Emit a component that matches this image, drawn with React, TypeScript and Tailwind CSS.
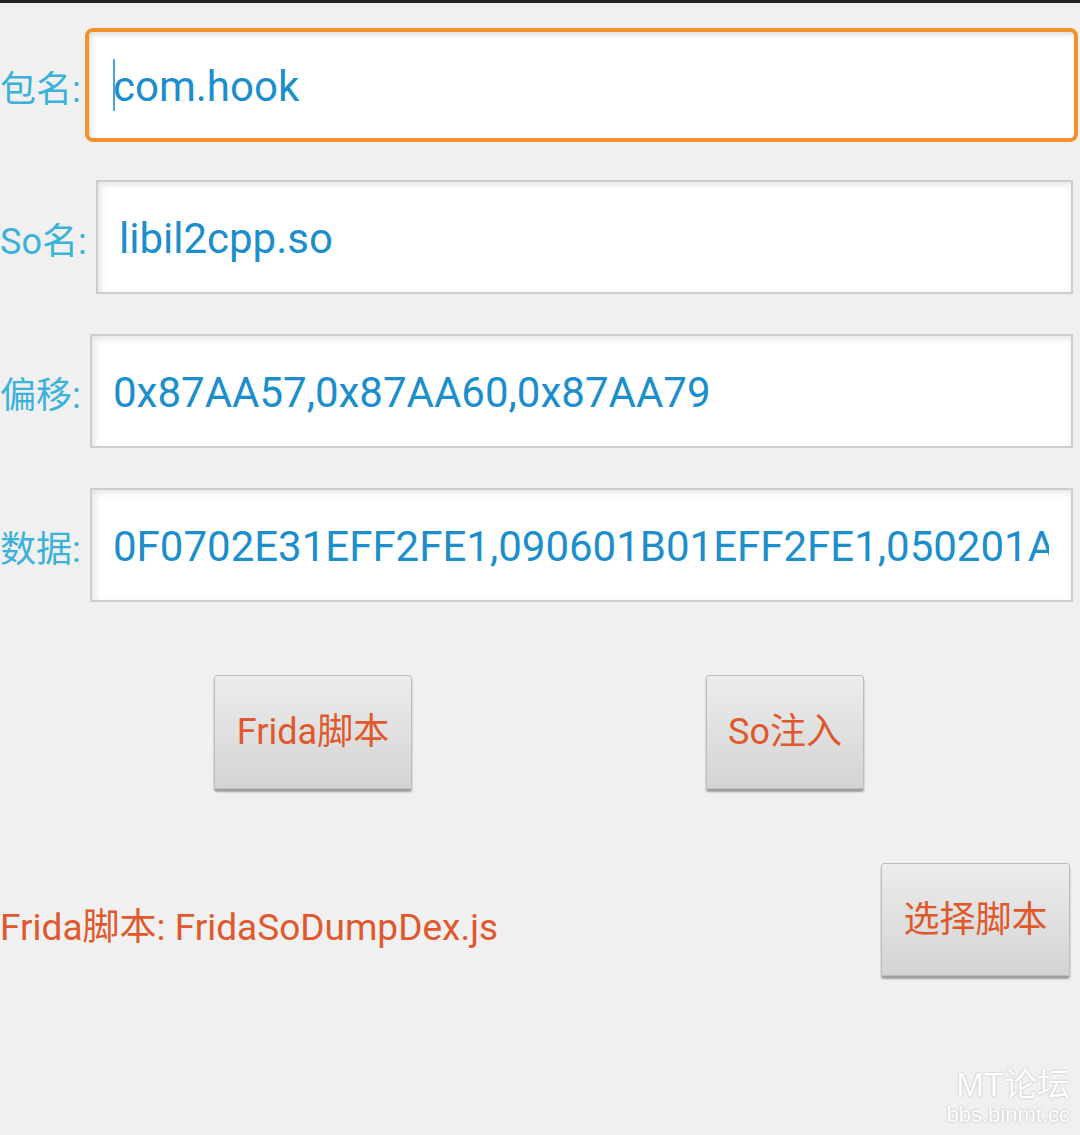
import React from "react";

const FONT = { fontFamily: "Roboto, 'Noto Sans CJK SC', 'Noto Sans', sans-serif" };

function Field({ label, value, labelW, mr, focused, caret }: { label: string; value: string; labelW: string; mr: string; focused?: boolean; caret?: boolean }) {
  return (
    <div className="flex items-center h-[114px]">
      <div className={`${labelW} shrink-0 text-[36px] leading-[44px] text-[#3ab2da] pt-[10px]`}>{label}</div>
      <div
        className={`flex-1 ${mr} h-full flex items-center overflow-hidden bg-white ${
          focused
            ? "border-[4px] border-[#f2922a] rounded-[8px] shadow-[inset_2px_3px_5px_rgba(0,0,0,0.12)] pl-[24px]"
            : "border-2 border-[#cdcdcd] shadow-[inset_3px_3px_6px_rgba(0,0,0,0.10)] pl-[21px]"
        } pr-[22px]`}
      >
        <div className="relative overflow-hidden whitespace-nowrap text-[42px] leading-[56px] text-[#1b8ecb] w-full pt-[4px]">
          {caret && <span className="absolute left-0 top-[4px] h-[52px] w-[2px] bg-[#4aa5d8]" />}
          {value}
        </div>
      </div>
    </div>
  );
}

function Btn({ text, w, h }: { text: string; w: string; h: string }) {
  return (
    <div
      className={`${w} ${h} flex items-center justify-center rounded-[3px] border border-[#bdbdbd] bg-gradient-to-b from-[#ececec] to-[#d4d4d4] shadow-[0_3px_2px_rgba(0,0,0,0.35)] text-[36px] leading-[44px] text-[#e0582b]`}
    >
      {text}
    </div>
  );
}

export default function App() {
  return (
    <div className="relative w-[1080px] h-[1135px] bg-[#f0f0f0] overflow-hidden" style={FONT}>
      <div className="h-[3px] bg-[#222]" />
      <div className="mt-[25px]">
        <Field label="包名:" value="com.hook" labelW="w-[85px]" mr="mr-[2px]" focused caret />
      </div>
      <div className="mt-[38px]">
        <Field label="So名:" value="libil2cpp.so" labelW="w-[96px]" mr="mr-[7px]" />
      </div>
      <div className="mt-[40px]">
        <Field label="偏移:" value="0x87AA57,0x87AA60,0x87AA79" labelW="w-[90px]" mr="mr-[7px]" />
      </div>
      <div className="mt-[40px]">
        <Field label="数据:" value="0F0702E31EFF2FE1,090601B01EFF2FE1,050201A01EFF2FE1" labelW="w-[90px]" mr="mr-[7px]" />
      </div>
      <div className="mt-[73px] flex">
        <div className="ml-[214px]">
          <Btn text="Frida脚本" w="w-[198px]" h="h-[114px]" />
        </div>
        <div className="ml-[294px]">
          <Btn text="So注入" w="w-[158px]" h="h-[114px]" />
        </div>
      </div>
      <div className="mt-[74px] flex items-center">
        <div className="flex-1 text-[37px] leading-[46px] text-[#e0582b] pt-[16px]">Frida脚本: FridaSoDumpDex.js</div>
        <div className="mr-[10px]">
          <Btn text="选择脚本" w="w-[189px]" h="h-[113px]" />
        </div>
      </div>
      <div className="absolute right-[10px] bottom-[8px] flex flex-col items-end text-white [text-shadow:0_0_2px_rgba(0,0,0,0.3)]" style={{ fontFamily: "'Liberation Sans', 'Noto Sans CJK SC', sans-serif" }}>
        <div className="text-[33px] leading-[36px]">MT论坛</div>
        <div className="text-[22px] leading-[24px]">bbs.binmt.cc</div>
      </div>
    </div>
  );
}
